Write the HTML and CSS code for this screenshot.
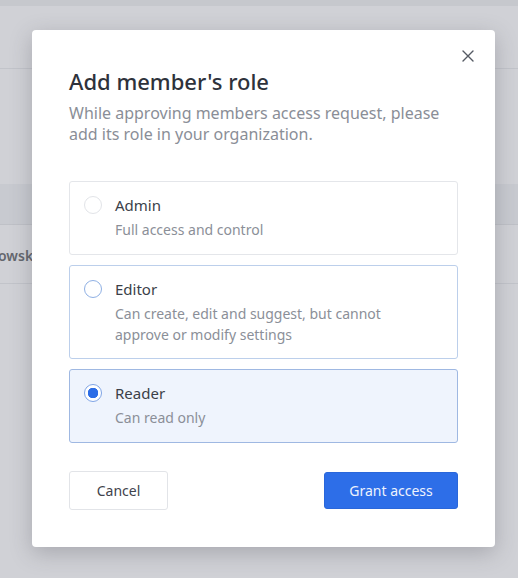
FILE: index.html
```html
<!DOCTYPE html>
<html>
<head>
<meta charset="utf-8">
<link rel="stylesheet" href="styles.css">
</head>
<body>
<div class="page">
  <div class="topstrip"></div>
  <div class="header-row"><span class="hdr-text">t</span></div>
  <div class="spacer"></div>
  <div class="table-head"></div>
  <div class="table-row"><span class="row-text">owsk</span></div>
</div>
<div class="overlay">
  <div class="modal">
    <button class="close" aria-label="Close">
      <svg width="12" height="12" viewBox="0 0 12 12"><path d="M1 1L11 11M11 1L1 11" stroke="#555a63" stroke-width="1.4" stroke-linecap="round"/></svg>
    </button>
    <h1 class="title">Add member's role</h1>
    <p class="subtitle">While approving members access request, please add its role in your organization.</p>
    <div class="options">
      <label class="option">
        <span class="radio"></span>
        <span class="text"><span class="opt-title">Admin</span><span class="opt-desc">Full access and control</span></span>
      </label>
      <label class="option hover">
        <span class="radio radio-hover"></span>
        <span class="text"><span class="opt-title">Editor</span><span class="opt-desc">Can create, edit and suggest, but cannot approve or modify settings</span></span>
      </label>
      <label class="option selected">
        <span class="radio radio-checked"></span>
        <span class="text"><span class="opt-title">Reader</span><span class="opt-desc">Can read only</span></span>
      </label>
    </div>
    <div class="actions">
      <button class="btn btn-cancel">Cancel</button>
      <button class="btn btn-primary">Grant access</button>
    </div>
  </div>
</div>
</body>
</html>
```
FILE: styles.css
```css
* { box-sizing: border-box; }
html, body { margin: 0; padding: 0; }
body {
  width: 518px;
  height: 578px;
  overflow: hidden;
  background: #d0d1d6;
  font-family: "Noto Sans", "Open Sans", sans-serif;
  position: relative;
}
.page { display: flex; flex-direction: column; }
.topstrip { height: 6px; background: #c6c8cd; }
.header-row {
  height: 63px;
  border-bottom: 1px solid #c2c4ca;
  display: flex;
  align-items: center;
}
.hdr-text { color: #5d6068; font-size: 14px; margin-left: -6px; margin-top: 4px; }
.spacer { height: 115px; }
.table-head { height: 41px; background: #c8cad0; border-bottom: 1px solid #bfc1c7; }
.table-row {
  height: 59px;
  border-bottom: 1px solid #c2c4ca;
  display: flex;
  align-items: center;
}
.row-text { color: #64676e; font-size: 14px; font-weight: 600; margin-left: -2px; margin-top: 2px; }

.overlay {
  position: absolute;
  left: 0; top: 0; right: 0; bottom: 0;
}
.modal {
  position: absolute;
  left: 32px;
  top: 30px;
  width: 463px;
  height: 517px;
  background: #ffffff;
  border-radius: 4px;
  box-shadow: 0 6px 22px rgba(60, 62, 72, 0.28);
  padding: 37px;
  display: flex;
  flex-direction: column;
}
.close {
  position: absolute;
  top: 19px;
  right: 20px;
  width: 14px;
  height: 14px;
  padding: 0;
  border: 0;
  background: transparent;
  display: flex;
  align-items: center;
  justify-content: center;
}
.title {
  margin: 0;
  font-size: 22px;
  line-height: 28px;
  font-weight: 500;
  color: #2e323b;
}
.subtitle {
  margin: 8px 0 0 0;
  font-size: 16px;
  line-height: 21px;
  color: #8a8e97;
  padding-right: 6px;
}
.options {
  margin-top: 36px;
  display: flex;
  flex-direction: column;
  gap: 10px;
}
.option {
  display: flex;
  align-items: flex-start;
  gap: 13px;
  border: 1px solid #e4e6ea;
  border-radius: 3px;
  padding: 13px 30px 13.5px 14px;
  background: #fff;
}
.option.hover { border-color: #bccfeb; }
.option.selected { background: #eff4fd; border-color: #9fb8e2; }
.radio {
  flex: none;
  width: 18px;
  height: 18px;
  border-radius: 50%;
  border: 1.5px solid #e2e4e8;
  margin-top: 1px;
  background: #fff;
}
.radio-hover { border-color: #8fb0e4; }
.radio-checked {
  border-color: #7fa4e6;
  background: radial-gradient(circle, #2d6de6 0 5px, #ffffff 5.5px);
}
.text { display: flex; flex-direction: column; gap: 4px; }
.opt-title {
  font-size: 15px;
  line-height: 20px;
  color: #3b3f49;
}
.opt-desc {
  font-size: 14px;
  line-height: 21px;
  color: #8b8f98;
}
.actions {
  margin-top: 28px;
  display: flex;
  justify-content: space-between;
  align-items: center;
}
.btn {
  font-family: inherit;
  font-size: 14px;
  border-radius: 3px;
  cursor: pointer;
}
.btn-cancel {
  width: 99px;
  height: 39px;
  background: #fff;
  border: 1px solid #e2e4e8;
  color: #3f434c;
}
.btn-primary {
  width: 134px;
  height: 37px;
  background: #2d6ee8;
  border: 1px solid #2a67da;
  color: #eef3fd;
}
```
